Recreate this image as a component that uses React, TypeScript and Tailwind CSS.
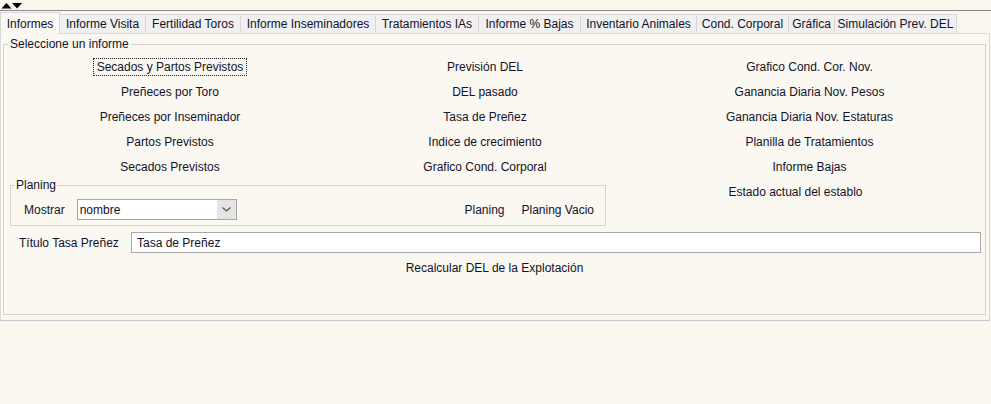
import React from 'react';

const tabs: { label: string; w: string }[] = [
    { label: 'Informe Visita', w: 'w-[86px]' },
    { label: 'Fertilidad Toros', w: 'w-[95px]' },
    { label: 'Informe Inseminadores', w: 'w-[135px]' },
    { label: 'Tratamientos IAs', w: 'w-[103px]' },
    { label: 'Informe % Bajas', w: 'w-[102px]' },
    { label: 'Inventario Animales', w: 'w-[116px]' },
    { label: 'Cond. Corporal', w: 'w-[92px]' },
    { label: 'Gráfica', w: 'w-[46px]' },
    { label: 'Simulación Prev. DEL', w: 'w-[122px]' },
];

const rows: string[][] = [
    ['Secados y Partos Previstos', 'Previsión DEL', 'Grafico Cond. Cor. Nov.'],
    ['Preñeces por Toro', 'DEL pasado', 'Ganancia Diaria Nov. Pesos'],
    ['Preñeces por Inseminador', 'Tasa de Preñez', 'Ganancia Diaria Nov. Estaturas'],
    ['Partos Previstos', 'Indice de crecimiento', 'Planilla de Tratamientos'],
    ['Secados Previstos', 'Grafico Cond. Corporal', 'Informe Bajas'],
];

const LinkButton: React.FC<{ label: string; focused?: boolean }> = ({ label, focused }) => (
    <button
        className={
            'h-[18px] px-[3px] leading-[16px] border whitespace-nowrap ' +
            (focused ? 'border-dotted border-[#222]' : 'border-transparent')
        }
    >
        {label}
    </button>
);

const App: React.FC = () => {
    return (
        <div className="w-[991px] h-[404px] overflow-hidden bg-[#f9f6ee] text-[12px] text-[#12122a] font-['Liberation_Sans',Arial,sans-serif]">
            {/* barra superior */}
            <div className="h-[11px] border-b border-[#8a8a8a] pl-[1px] pt-[3px]">
                <svg width="22" height="6" viewBox="0 0 22 6">
                    <polygon points="0.5,5.5 5.5,0 10.5,5.5" fill="#000" />
                    <polygon points="11,0 21,0 16,5.5" fill="#000" />
                </svg>
            </div>

            {/* pestañas */}
            <div className="flex items-end h-[22px]">
                <div className="relative z-10 w-[60px] h-[22px] -mb-[1px] bg-[#faf8f1] border border-b-0 border-[#d6d6d6] flex items-center justify-center">
                    Informes
                </div>
                {tabs.map((t) => (
                    <div
                        key={t.label}
                        className={t.w + ' h-[19px] bg-[#f0f0f0] border border-l-0 border-b-0 border-[#d6d6d6] flex items-center justify-center whitespace-nowrap'}
                    >
                        {t.label}
                    </div>
                ))}
            </div>

            {/* panel */}
            <div className="w-[990px] h-[288px] bg-[#faf8f1] border border-[#dadada] border-b-[#c6c8cf] pt-[3px]">
                <fieldset className="ml-[2px] mr-[3px] h-[278px] border border-[#d6d3cb]">
                    <legend className="ml-[4px] px-[2px] leading-[14px]">Seleccione un informe</legend>

                    <div className="grid grid-cols-[332px_298px_1fr] pt-[3px]">
                        {rows.map((r, i) =>
                            r.map((label, j) => (
                                <div key={i + '-' + j} className="h-[25px] flex items-center justify-center">
                                    <LinkButton label={label} focused={i === 0 && j === 0} />
                                </div>
                            ))
                        )}
                    </div>

                    <div className="flex">
                        <fieldset className="ml-[6px] w-[596px] border border-[#d6d3cb] pb-[5px]">
                            <legend className="ml-[4px] px-[1px] leading-[12px]">Planing</legend>
                            <div className="flex items-center pt-[8px] pl-[13px] pr-[7px]">
                                <span>Mostrar</span>
                                <div className="ml-[12px] w-[160px] h-[21px] border border-[#a6a6a6] flex">
                                    <div className="flex-1 bg-white flex items-center pl-[2px]">nombre</div>
                                    <div className="w-[19px] bg-[#e4e4e4] flex items-center justify-center">
                                        <svg width="9" height="5" viewBox="0 0 9 5">
                                            <polyline points="0.5,0.5 4.5,4 8.5,0.5" fill="none" stroke="#555" strokeWidth="1.2" />
                                        </svg>
                                    </div>
                                </div>
                                <div className="ml-auto flex items-center gap-[9px]">
                                    <LinkButton label="Planing" />
                                    <LinkButton label="Planing Vacio" />
                                </div>
                            </div>
                        </fieldset>
                        <div className="flex-1 flex justify-center pt-[4px]">
                            <LinkButton label="Estado actual del establo" />
                        </div>
                    </div>

                    <div className="flex items-center mt-[6px] pl-[15px] pr-[4px]">
                        <span className="w-[112px] whitespace-nowrap">Título Tasa Preñez</span>
                        <div className="flex-1 h-[21px] bg-white border border-[#a9a9a9] flex items-center pl-[5px]">
                            Tasa de Preñez
                        </div>
                    </div>

                    <div className="h-[27px] flex items-center justify-center pt-[3px]">
                        <LinkButton label="Recalcular DEL de la Explotación" />
                    </div>
                </fieldset>
            </div>
        </div>
    );
};

export default App;
